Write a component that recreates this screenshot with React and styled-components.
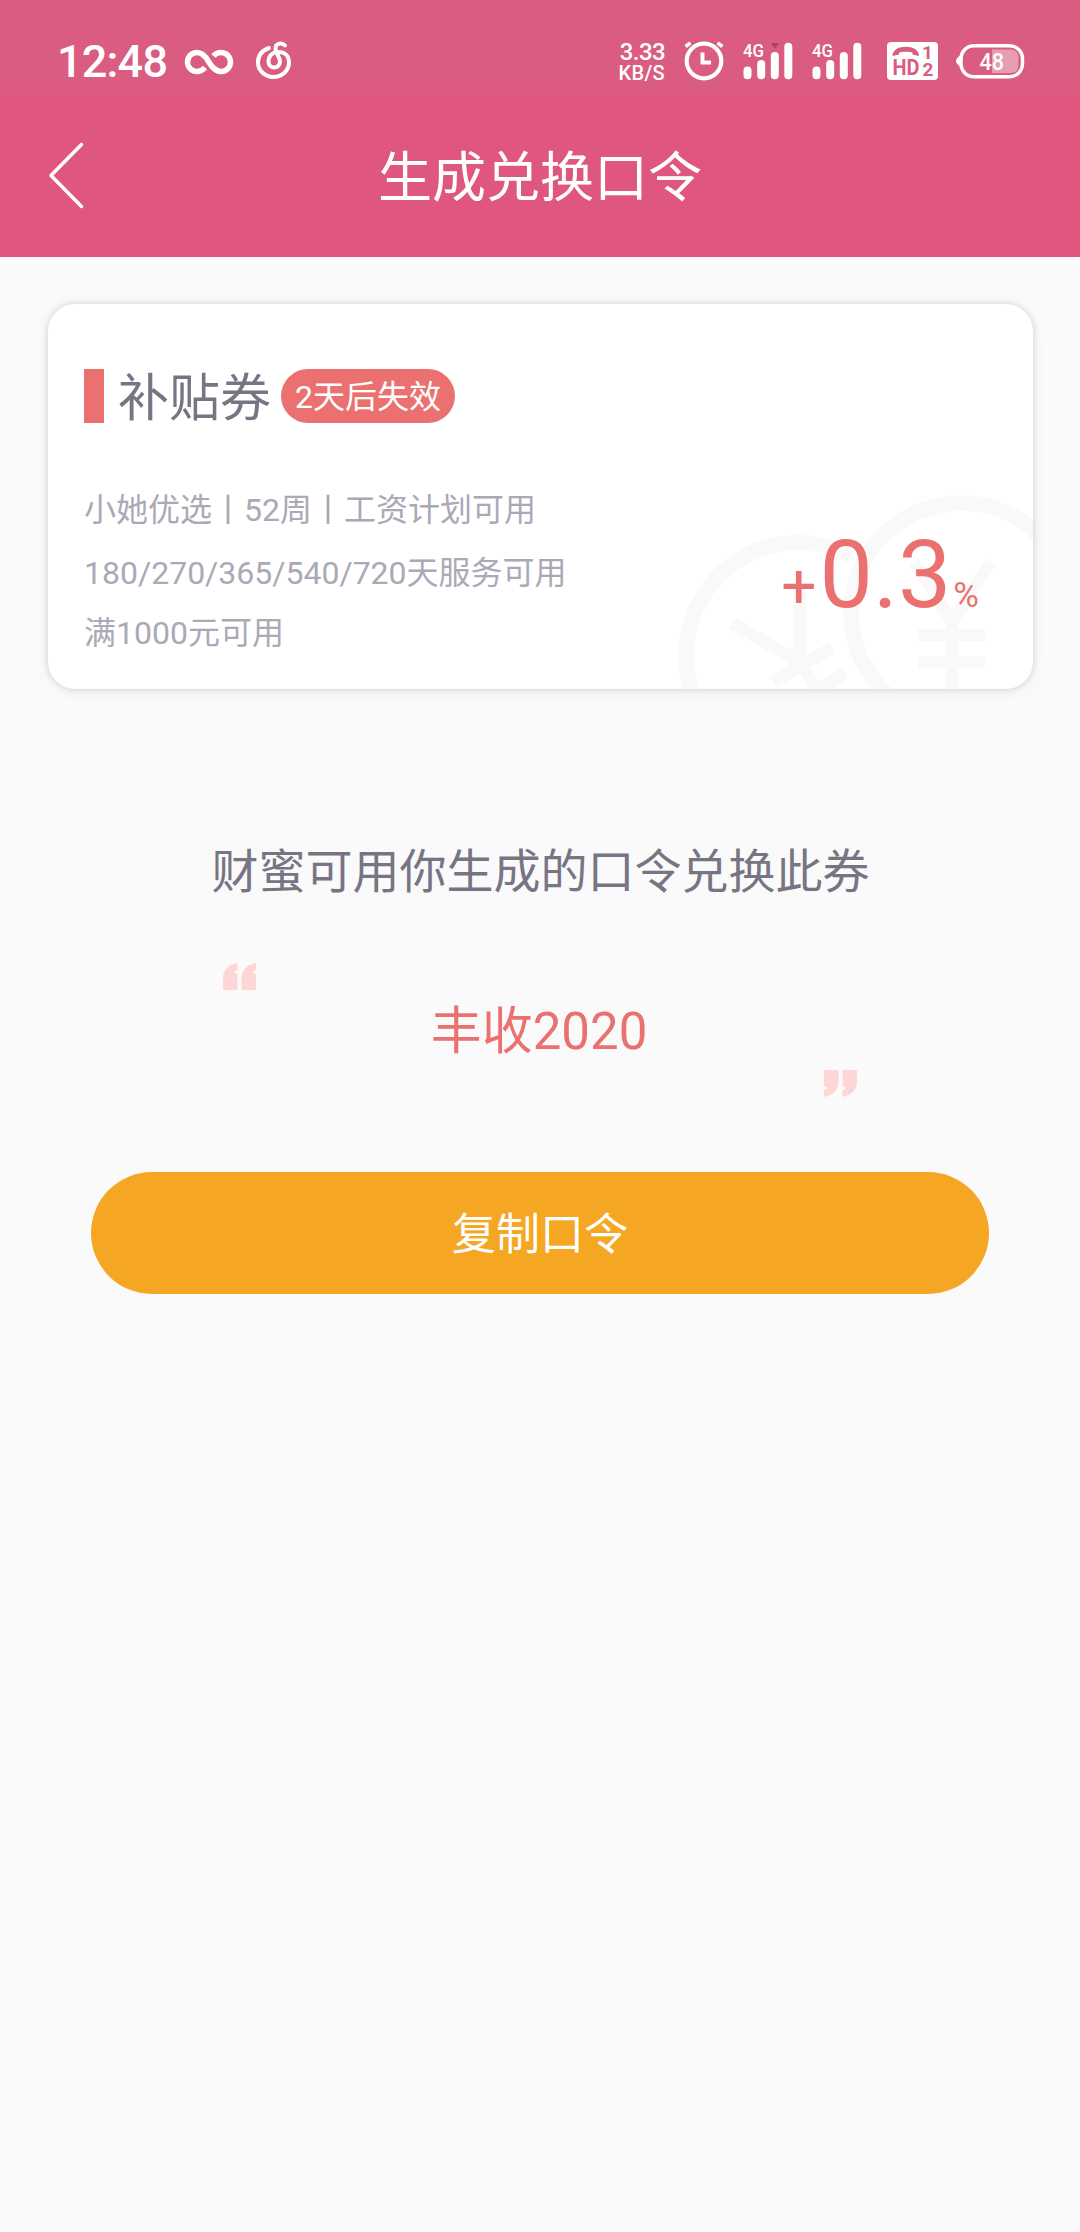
import React from "react";
import styled, { createGlobalStyle } from "styled-components";

const GlobalStyle = createGlobalStyle`
  * {
    box-sizing: border-box;
  }

  body {
    margin: 0;
    background: #fafafa;
    font-family: Roboto, "Noto Sans CJK SC", sans-serif;
  }
`;

const Page = styled.div`
  width: 1080px;
  min-height: 2232px;
  background: #fafafa;
`;

const StatusBar = styled.div`
  display: flex;
  justify-content: space-between;
  height: 94px;
  padding: 40px 55px 0 57px;
  background: #da5c80;
  color: #fff;
`;

const StatusGroup = styled.div`
  display: flex;
  align-items: flex-start;
`;

const Clock = styled.div`
  width: 126px;
  font-size: 45px;
  font-weight: 500;
  letter-spacing: -0.8px;
  line-height: 43px;
`;

const Icon = styled.svg`
  display: block;
  flex: none;
  margin-right: ${({ $gap }) => $gap || 0}px;
  overflow: visible;
`;

const Speed = styled.div`
  display: flex;
  flex-direction: column;
  align-items: flex-end;
  width: 50px;
  margin-right: 19px;
  font-weight: 500;
`;

const SpeedValue = styled.span`
  font-size: 24px;
  letter-spacing: -0.6px;
  line-height: 25px;
`;

const SpeedUnit = styled.span`
  font-size: 20px;
  letter-spacing: 0.3px;
  line-height: 16px;
`;

const NavBar = styled.header`
  display: grid;
  grid-template-columns: 100px 1fr 100px;
  align-items: center;
  height: 163px;
  background: #df577f;
  color: #fff;
`;

const BackButton = styled.button`
  display: flex;
  height: 100px;
  padding: 16px 0 0 47px;
  border: 0;
  background: none;
`;

const NavTitle = styled.h1`
  margin: 0;
  padding-top: 7px;
  font-size: 54px;
  font-weight: 400;
  line-height: 80px;
  text-align: center;
`;

const Content = styled.main`
  display: flex;
  flex-direction: column;
  padding: 47px 47px 0 48px;
`;

const Coupon = styled.section`
  position: relative;
  height: 385px;
  padding: 65px 37px 0 36px;
  border-radius: 27px;
  background: #fff;
  box-shadow: 0 0 6px rgba(0, 0, 0, 0.14), 0 2px 16px rgba(0, 0, 0, 0.06);
  overflow: hidden;
`;

const Watermark = styled.svg`
  position: absolute;
  right: 0;
  bottom: 0;
`;

const CouponHead = styled.div`
  display: flex;
  align-items: center;
  height: 54px;
`;

const Marker = styled.span`
  width: 20px;
  height: 54px;
  margin-right: 14px;
  background: #eb7171;
`;

const CouponName = styled.h2`
  margin: 0;
  padding-top: 5px;
  color: #777584;
  font-size: 51px;
  font-weight: 400;
  line-height: 54px;
`;

const Badge = styled.span`
  height: 54px;
  margin-left: 10px;
  padding: 0 14px;
  border-radius: 27px;
  background: #eb7171;
  color: #fff;
  font-size: 32px;
  line-height: 56px;
`;

const CouponBody = styled.div`
  position: relative;
  display: flex;
  justify-content: space-between;
  padding-top: 54px;
`;

const Rules = styled.ul`
  margin: 0;
  padding: 2px 0 0;
  list-style: none;
  color: #aba9b6;
  font-size: 32px;
`;

const Rule = styled.li`
  height: ${({ $height }) => $height}px;
  line-height: 62px;
  white-space: nowrap;
`;

const Rate = styled.div`
  display: flex;
  align-items: baseline;
  height: 112px;
  padding: 42px 17px 0 0;
  color: #eb7171;
  line-height: 112px;
`;

const RateSign = styled.span`
  margin-right: 3px;
  font-size: 62px;
`;

const RateValue = styled.span`
  font-size: 95px;
`;

const RateUnit = styled.span`
  margin-left: 2px;
  font-size: 35px;
`;

const Hint = styled.p`
  margin: 148px 0 0;
  color: #777584;
  font-size: 47px;
  line-height: 70px;
  text-align: center;
`;

const CodeBox = styled.div`
  display: flex;
  justify-content: space-between;
  width: 634px;
  height: 134px;
  margin: 56px 0 0 175px;
`;

const Code = styled.strong`
  padding: 31px 2px 0 0;
  color: #eb7171;
  font-size: 51px;
  font-weight: 400;
  line-height: 76px;
`;

const Quote = styled.svg`
  align-self: ${({ $end }) => ($end ? "flex-end" : "flex-start")};
  transform: ${({ $end }) => ($end ? "rotate(180deg)" : "none")};
`;

const CopyButton = styled.button`
  height: 122px;
  margin: 75px 44px 0 43px;
  padding: 0 0 4px;
  border: 0;
  border-radius: 61px;
  background: #f5a623;
  color: #fff;
  font-family: inherit;
  font-size: 44px;
`;

const SignalText = styled.text`
  font-size: 18px;
  font-weight: 500;
  fill: #fff;
`;

const BatteryText = styled.text`
  font-size: 23px;
  font-weight: 500;
  fill: #fff;
`;

const HdText = styled.text`
  font-size: ${({ $size }) => $size}px;
  font-weight: 700;
  fill: #da5c80;
`;

const rules = [
  { text: "小她优选丨52周丨工资计划可用", height: 63 },
  { text: "180/270/365/540/720天服务可用", height: 60 },
  { text: "满1000元可用", height: 60 },
];

function InfinityIcon() {
  return (
    <Icon width="50" height="40" $gap={22} viewBox="0 0 50 40" fill="none" stroke="#fff" strokeWidth="5.5">
      <path d="M22 27.5C19.5 30.5 16.8 31.5 14 31.5A9.5 9.5 0 0 1 14 12.5C19 12.5 22 15.5 25.5 21.5C29 27.5 32.5 31.5 38 31.5A9.5 9.5 0 0 0 38 12.5C35 12.5 32.5 13.5 30.5 16" />
    </Icon>
  );
}

function MusicIcon() {
  return (
    <Icon width="38" height="40" viewBox="0 0 38 40" fill="none" stroke="#fff" strokeWidth="4" strokeLinecap="round">
      <path d="M14 8C7 10.5 3 16 3 22.500A15.500 14.500 0 0 0 34 22.500C34 16 30 12 23.500 12C17 12 13.500 16.500 13.500 21.500A5.700 6 0 0 0 25 21.500C25 17 20.500 13 20.500 8.500C20.500 3 27 2 30 5.500" />
    </Icon>
  );
}

function AlarmIcon() {
  return (
    <Icon width="40" height="40" $gap={19} viewBox="0 0 40 40" fill="none" stroke="#fff">
      <circle cx="20" cy="21" r="17.3" strokeWidth="4.2" />
      <path d="M18.5 12.5V22.5H27" strokeWidth="4" />
      <path d="M1.5 6.5L6.5 2.8M38.5 6.5L33.5 2.8" strokeWidth="3.5" />
    </Icon>
  );
}

function SignalIcon({ active, gap }) {
  return (
    <Icon width="50" height="40" $gap={gap} viewBox="0 0 50 40">
      <SignalText x="0" y="16.5" textLength="21" lengthAdjust="spacingAndGlyphs">4G</SignalText>
      <g stroke="#fff" strokeWidth="8" strokeLinecap="round">
        <path d="M4.500 30.500V35.300M18.200 24V35.300M31.800 16V35.300M45.300 6.800V35.300" />
      </g>
      {active && <path d="M28 3H36L32 9Z" fill="#a84562" />}
    </Icon>
  );
}

function HdCallIcon() {
  return (
    <Icon width="51" height="40" $gap={18} viewBox="0 0 51 40">
      <rect y="2" width="51" height="38" rx="4" fill="#fff" />
      <path d="M5.500 16C5 3.500 32.500 3.500 32 16L25.500 14.500V12.500C22 11.500 15.500 11.500 12 12.500V14.500Z" fill="#da5c80" />
      <HdText $size={22} x="5.500" y="34.500" textLength="27" lengthAdjust="spacingAndGlyphs">HD</HdText>
      <HdText $size={19} x="35" y="19">1</HdText>
      <HdText $size={19} x="35.500" y="35.500">2</HdText>
    </Icon>
  );
}

function BatteryIcon() {
  return (
    <Icon width="69" height="40" viewBox="0 0 69 40">
      <path d="M5 15Q0 18 0 21Q0 24 5 27Z" fill="#fff" />
      <rect x="5" y="5.700" width="61.500" height="31" rx="13" fill="none" stroke="#fff" strokeWidth="3.500" />
      <path d="M36 9.500H54Q62.500 9.500 62.500 18V25Q62.500 33 54 33H36Z" fill="#fff" fillOpacity="0.4" />
      <BatteryText x="23.500" y="29.500" textLength="24.500" lengthAdjust="spacingAndGlyphs">48</BatteryText>
    </Icon>
  );
}

function QuoteMark({ end }) {
  return (
    <Quote $end={end} width="33" height="27" viewBox="0 0 33 27" fill="#ffd6d6">
      <path d="M0 27V16C0 7 5 2 14.500 0V7Q12 7.500 11 9.500L14.500 11V27Z" />
      <path d="M18.500 27V16C18.500 7 23.500 2 33 0V7Q30.500 7.500 29.500 9.500L33 11V27Z" />
    </Quote>
  );
}

// Two overlapping yuan coins, cut off by the card corner
function CoinWatermark() {
  return (
    <Watermark width="373" height="209" viewBox="0 0 373 209" fill="none" stroke="#f9f9f9" strokeWidth="15.5">
      <path d="M190 75A112 112 0 1 0 206 262" transform="translate(1 1)" />
      <path d="M72 143L140 182L158 213M140 182V106M113 202L172 168M128 227L185 193" strokeWidth="12.5" />
      <circle cx="301" cy="133" r="110" />
      <path d="M254 82L292 142L331 82M292 140V209M258 155H325M258 182.500H325" strokeWidth="12" />
    </Watermark>
  );
}

function App() {
  return (
    <Page>
      <GlobalStyle />
      <StatusBar>
        <StatusGroup>
          <Clock>12:48</Clock>
          <InfinityIcon />
          <MusicIcon />
        </StatusGroup>
        <StatusGroup>
          <Speed>
            <SpeedValue>3.33</SpeedValue>
            <SpeedUnit>KB/S</SpeedUnit>
          </Speed>
          <AlarmIcon />
          <SignalIcon active gap={19} />
          <SignalIcon gap={25} />
          <HdCallIcon />
          <BatteryIcon />
        </StatusGroup>
      </StatusBar>
      <NavBar>
        <BackButton aria-label="返回">
          <svg width="38" height="70" viewBox="0 0 38 70" fill="none" stroke="#fff" strokeWidth="3.5" strokeLinecap="round" strokeLinejoin="round">
            <path d="M34.5 2.5L4 33.5L34.5 64.5" />
          </svg>
        </BackButton>
        <NavTitle>生成兑换口令</NavTitle>
      </NavBar>
      <Content>
        <Coupon>
          <CoinWatermark />
          <CouponHead>
            <Marker />
            <CouponName>补贴券</CouponName>
            <Badge>2天后失效</Badge>
          </CouponHead>
          <CouponBody>
            <Rules>
              {rules.map((rule) => (
                <Rule key={rule.text} $height={rule.height}>{rule.text}</Rule>
              ))}
            </Rules>
            <Rate>
              <RateSign>+</RateSign>
              <RateValue>0.3</RateValue>
              <RateUnit>%</RateUnit>
            </Rate>
          </CouponBody>
        </Coupon>
        <Hint>财蜜可用你生成的口令兑换此券</Hint>
        <CodeBox>
          <QuoteMark />
          <Code>丰收2020</Code>
          <QuoteMark end />
        </CodeBox>
        <CopyButton>复制口令</CopyButton>
      </Content>
    </Page>
  );
}

export default App;
